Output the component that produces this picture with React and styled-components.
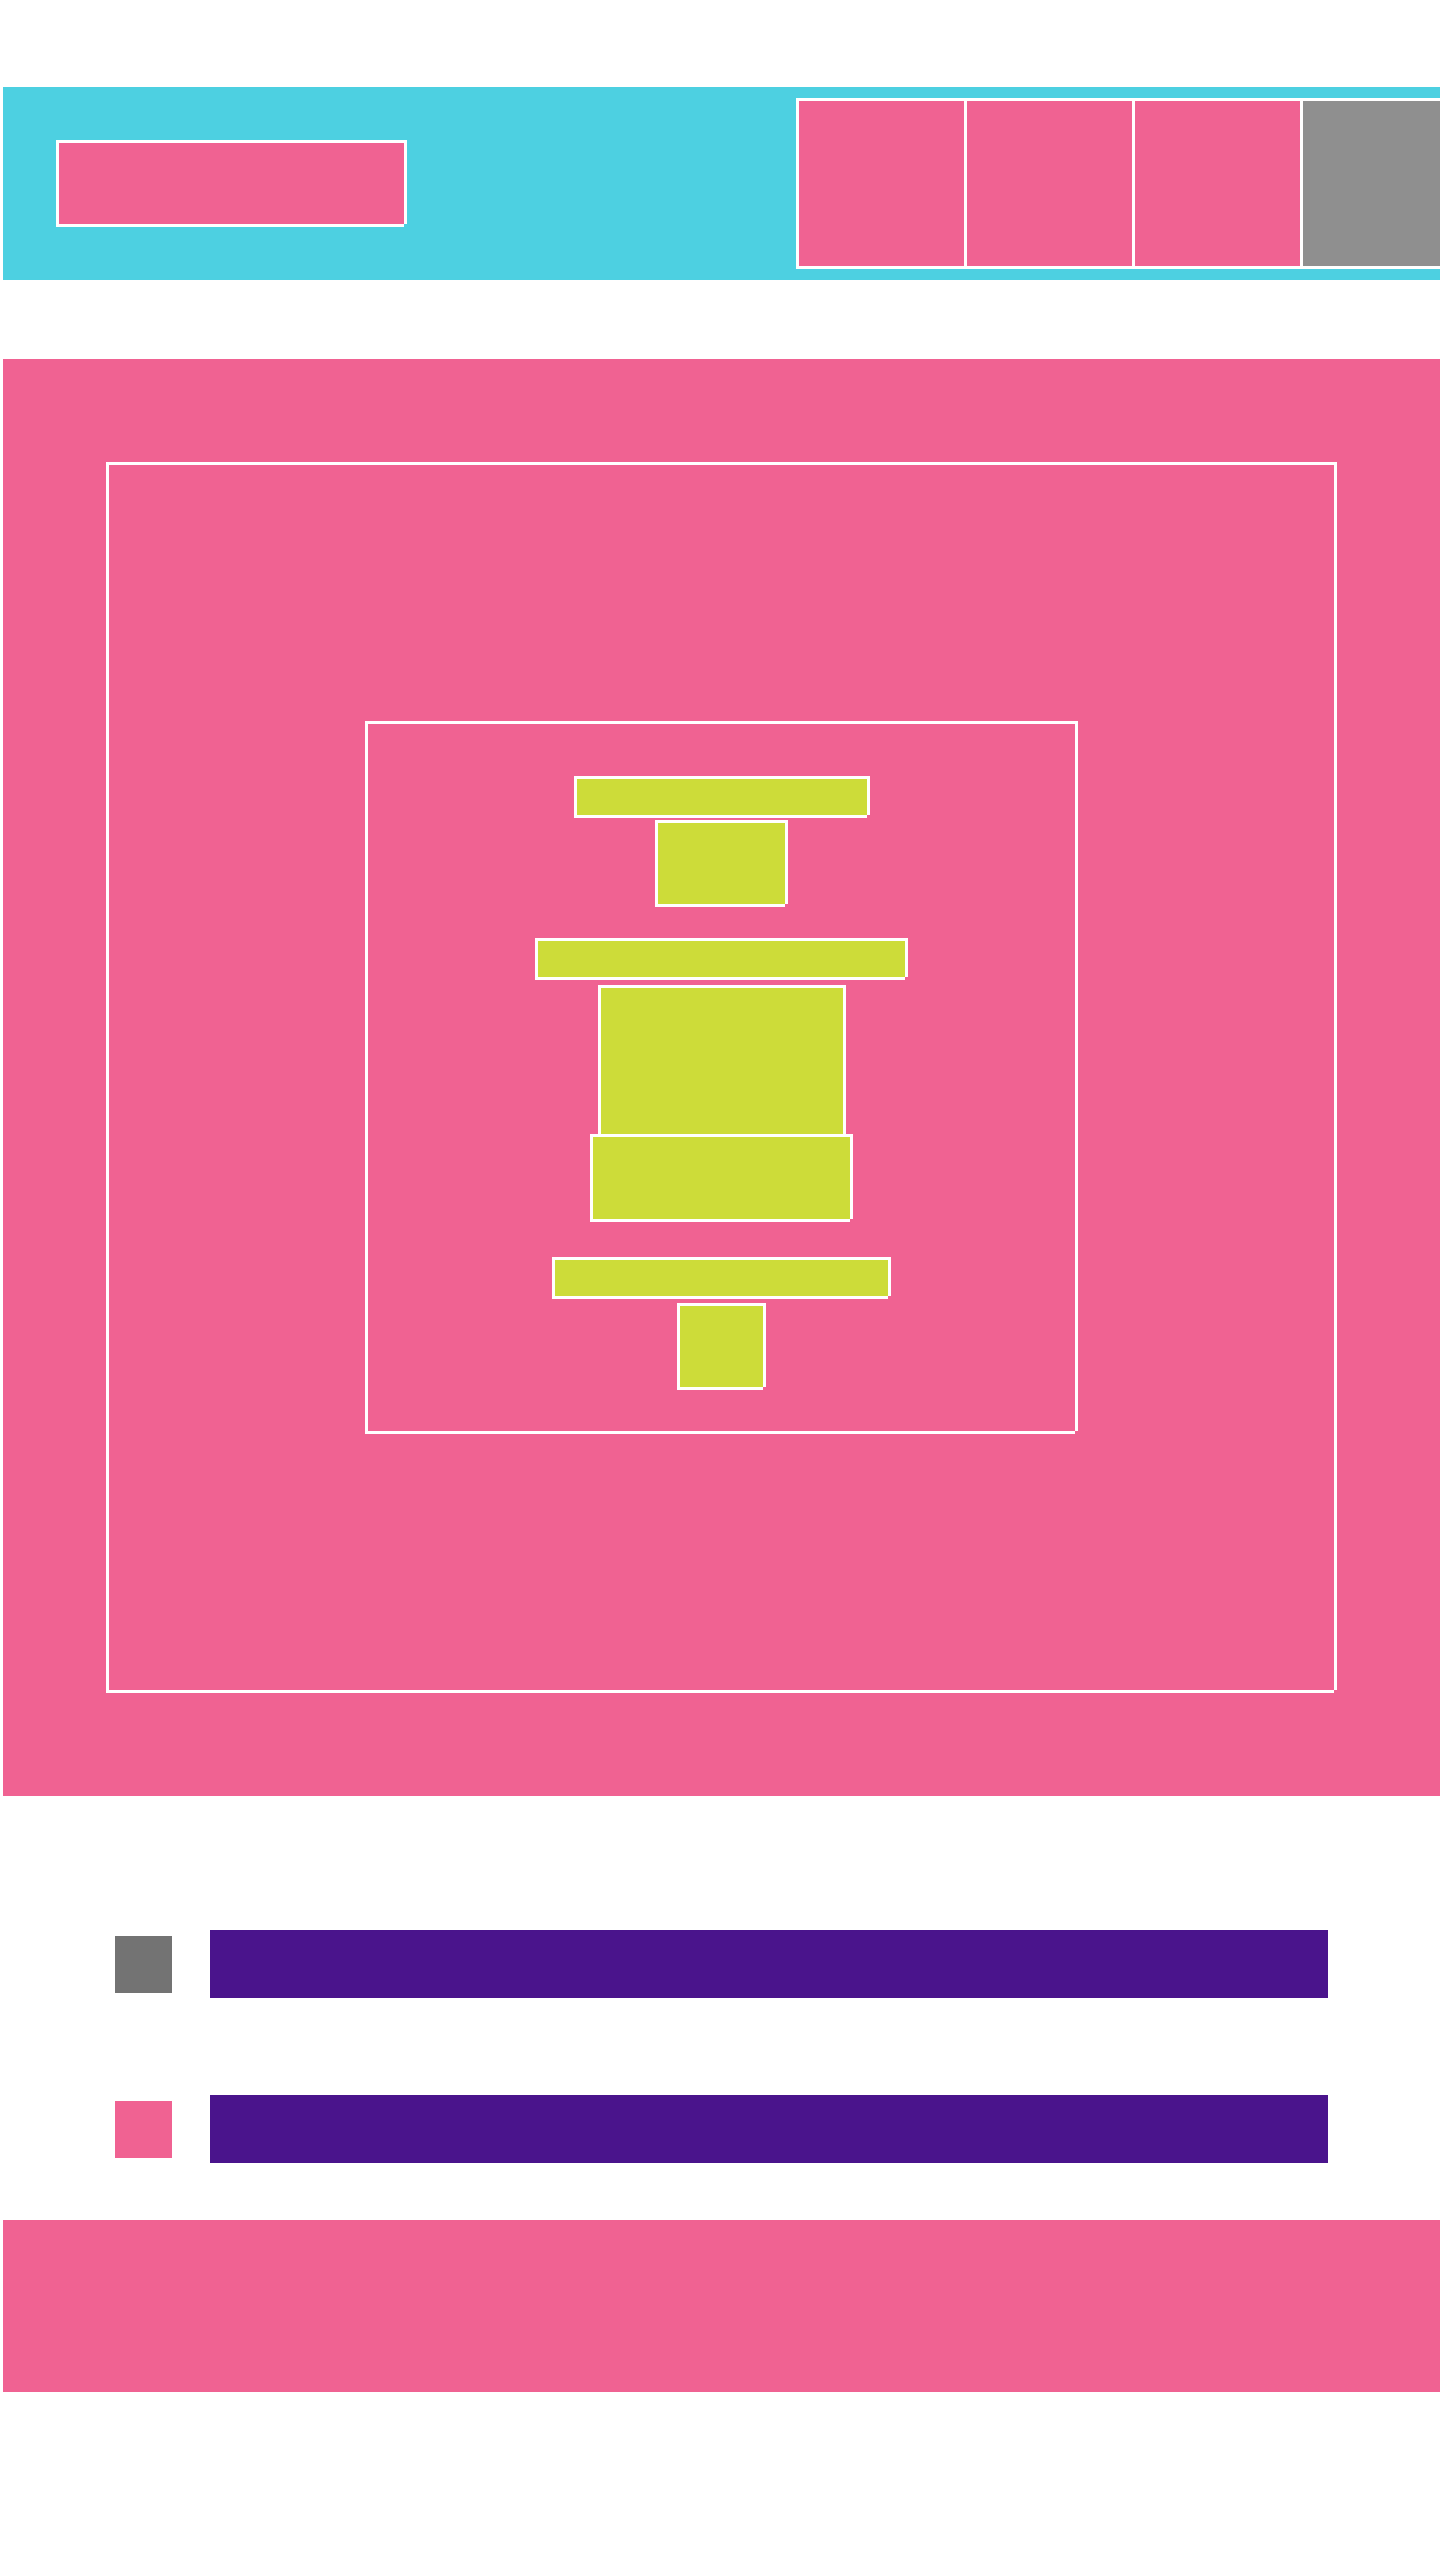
import React from 'react';
import styled, { createGlobalStyle, css } from 'styled-components';

const GlobalStyle = createGlobalStyle`
    html, body {
        margin: 0;
        padding: 0;
        background: #fff;
        overflow-x: hidden;
        font-family: "Liberation Sans", Arial, sans-serif;
    }
    #root {
        padding: 87px 0 0 3px;
    }
`;

// white edge on top/left, drawn outside on right/bottom (corner left open)
const framed = css`
    box-sizing: border-box;
    border-left: 3px solid #fff;
    border-top: 3px solid #fff;
    box-shadow: 3px 0 0 #fff, 0 3px 0 #fff;
`;

const Page = styled.div`
    display: flex;
    flex-direction: column;
`;

const Header = styled.header`
    display: flex;
    align-items: center;
    height: 193px;
    padding-left: 53px;
    background: #4dd0e1;
    overflow: hidden;
`;

const Logo = styled.div`
    ${framed};
    flex-shrink: 0;
    width: 348px;
    height: 84px;
    margin-bottom: 3px;
    background: #f06292;
`;

const Nav = styled.nav`
    display: flex;
    margin-left: 392px;
    margin-bottom: 3px;
`;

const NavItem = styled.div`
    ${framed};
    flex-shrink: 0;
    width: 168px;
    height: 168px;
    background: ${p => (p.$muted ? '#8f8f8f' : '#f06292')};
`;

const Hero = styled.section`
    margin-top: 79px;
    padding: 103px;
    background: #f06292;
`;

const Frame = styled.div`
    ${framed};
    display: flex;
    align-items: center;
    justify-content: center;
    width: 1228px;
    height: 1228px;
    margin-bottom: 3px;
    padding: 0 3px 3px 0;
`;

const Stack = styled.div`
    ${framed};
    display: flex;
    flex-direction: column;
    align-items: center;
    width: 710px;
    height: 710px;
    padding: 52px 3px 0 0;
`;

const Block = styled.div`
    ${framed};
    flex-shrink: 0;
    width: ${p => p.$w}px;
    height: ${p => p.$h}px;
    margin-top: ${p => p.$mt || 0}px;
    background: #cddc39;
`;

const List = styled.section`
    display: flex;
    flex-direction: column;
    gap: 97px;
    padding: 134px 112px 57px;
`;

const Row = styled.div`
    display: flex;
    align-items: center;
    gap: 38px;
`;

const Swatch = styled.div`
    flex-shrink: 0;
    width: 57px;
    height: 57px;
    background: ${p => p.$color};
`;

const Bar = styled.div`
    flex: 1;
    height: 68px;
    background: #4a148c;
`;

const Footer = styled.footer`
    height: 172px;
    background: #f06292;
`;

const blocks = [
    { w: 293, h: 39, mt: 0 },
    { w: 130, h: 84, mt: 5 },
    { w: 370, h: 39, mt: 34 },
    { w: 245, h: 149, mt: 8 },
    { w: 260, h: 85, mt: 0 },
    { w: 336, h: 39, mt: 38 },
    { w: 86, h: 84, mt: 7 },
];

export default function App() {
    return (
        <Page>
            <GlobalStyle />
            <Header>
                <Logo />
                <Nav>
                    <NavItem />
                    <NavItem />
                    <NavItem />
                    <NavItem $muted />
                </Nav>
            </Header>
            <Hero>
                <Frame>
                    <Stack>
                        {blocks.map((b, i) => (
                            <Block key={i} $w={b.w} $h={b.h} $mt={b.mt} />
                        ))}
                    </Stack>
                </Frame>
            </Hero>
            <List>
                <Row>
                    <Swatch $color="#737373" />
                    <Bar />
                </Row>
                <Row>
                    <Swatch $color="#f06292" />
                    <Bar />
                </Row>
            </List>
            <Footer />
        </Page>
    );
}
